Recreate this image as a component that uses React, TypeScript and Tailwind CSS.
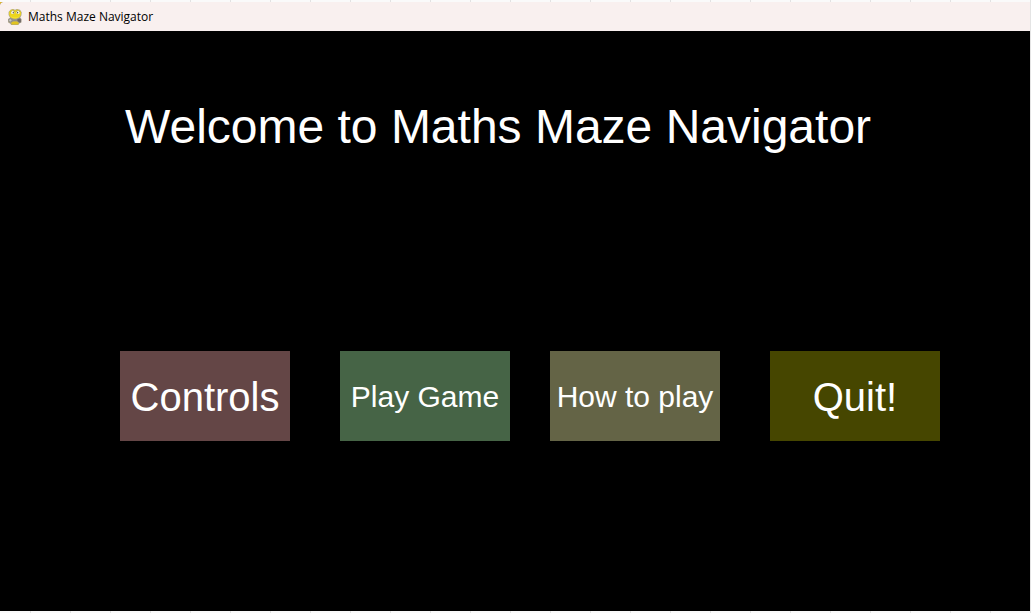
import React from 'react';

type MenuItem = { label: string; className: string };

const menuGroups: MenuItem[][] = [
  [
    { label: 'Controls', className: 'bg-[#644646] text-[40px]' },
    { label: 'Play Game', className: 'bg-[#466446] text-[30px]' },
  ],
  [
    { label: 'How to play', className: 'bg-[#646446] text-[30px]' },
    { label: 'Quit!', className: 'bg-[#464600] text-[40px]' },
  ],
];

function SnakeIcon() {
  return (
    <svg viewBox="0 0 16 16" className="h-4 w-4 shrink-0" aria-hidden="true">
      <path
        d="M3.500.7 6 0l2 .7L10 0l3 .8 1.700 2.400-.3 3.300-1.200 2 1.300 1.700-.2 3.300-2 1-1 1.500H4.300L3 14.500 1.200 13.400 1 10l2-1.300L1.600 6V3Z"
        fill="#aaa183"
      />
      <path d="M3.600 1 6 .6l2 .8L10.400.6l2.600 1 1 2-.2 2.700-1.600 2-2.700 1.200H6.200L3.400 8.200 2.200 6V3Z" fill="#ecd51e" />
      <path d="M3.200 6.800q4.800 3 9.700 0l-1.600 1.900-3.100.8-3.500-.8Z" fill="#f6e329" />
      <ellipse cx="5.700" cy="3.200" rx="1.700" ry="1.900" fill="#f5f3e4" />
      <ellipse cx="11" cy="3.200" rx="1.700" ry="1.900" fill="#f5f3e4" />
      <path d="M3.900 3.300a1.800 1.900 0 0 1 3.600 0M9.200 3.300a1.800 1.900 0 0 1 3.600 0" fill="none" stroke="#9a8b20" strokeWidth=".5" />
      <ellipse cx="6.300" cy="3.600" rx=".6" ry=".9" fill="#57543f" />
      <ellipse cx="10.600" cy="3.600" rx=".6" ry=".9" fill="#57543f" />
      <path d="M1.500 10 4 9.200l2 1.200h4l2-1.300 2.200.7v3.400l-1.900.8-2.200-2.100H6L4 13.500l-2.400-.4Z" fill="#92908c" />
      <path d="M10.200 10.500 12.500 9.600l1.400.8v2.500l-1.500.7-1.800-1.500Z" fill="#716966" />
      <path d="M3.300 10v2.600M2 11.300h2.600" stroke="#d0d0cc" strokeWidth=".8" />
      <path d="M4.300 13.600 6.500 12.500h3.400l2 1.500-.8 1.400H4.600Z" fill="#e2c41f" />
    </svg>
  );
}

export default function App() {
  return (
    <div className="flex min-h-screen flex-col border-r border-[#e4e4e4] bg-[#fafafa] bg-[linear-gradient(to_right,transparent_30px,#e2e2e2_30px,#e2e2e2_31px,transparent_31px)] bg-[length:40px_100%] pt-[2px] pb-[2px]">
      <div className="flex shrink-0 bg-[linear-gradient(135deg,#dfbd20_1px,#9b6838_2px,#fafafa_3px)]">
        <header className="flex h-[29px] grow items-center gap-1 rounded-tl-[4px] bg-[#f9f0ef] pl-[7px] font-['Open_Sans','Noto_Sans',sans-serif] text-[12px] leading-4 text-black">
          <SnakeIcon />
          <span className="pl-px">Maths Maze Navigator</span>
        </header>
      </div>
      <main className="flex grow flex-col bg-black pt-[68px] pr-[90px] pb-10 pl-[120px] font-['Liberation_Sans',Arial,sans-serif] text-white">
        <h1 className="pl-[5px] text-[48px] leading-[56px]">Welcome to Maths Maze Navigator</h1>
        <nav className="mt-[196px] flex gap-10" aria-label="Main menu">
          {menuGroups.map((group, index) => (
            <div key={index} className="flex grow basis-0 gap-[50px]">
              {group.map((item) => (
                <button
                  key={item.label}
                  type="button"
                  className={`flex h-[90px] min-w-0 grow basis-0 cursor-pointer items-center justify-center pt-[2px] leading-none whitespace-nowrap ${item.className}`}
                >
                  {item.label}
                </button>
              ))}
            </div>
          ))}
        </nav>
      </main>
    </div>
  );
}
